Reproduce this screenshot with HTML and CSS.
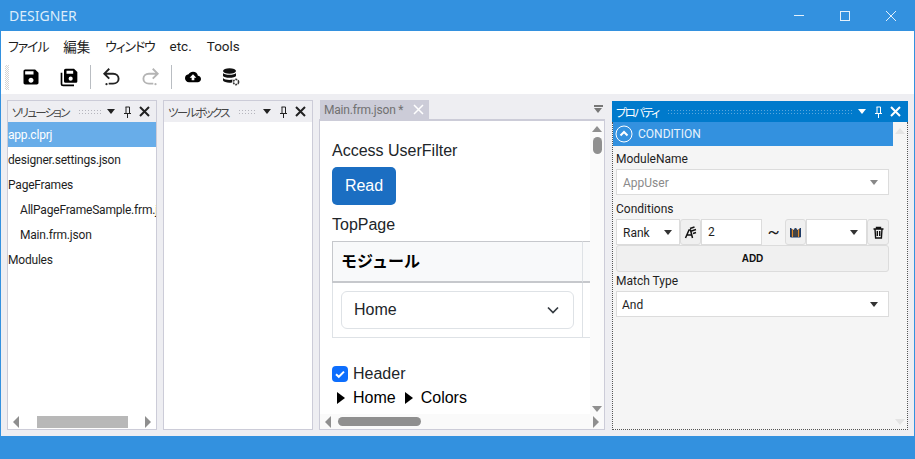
FILE: index.html
```html
<!DOCTYPE html>
<html lang="ja">
<head>
    <meta charset="UTF-8">
    <title>DESIGNER</title>
    <link rel="stylesheet" href="styles.css">
</head>
<body>
<div class="window">
    <div class="titlebar">
        <span class="app-title">DESIGNER</span>
        <div class="win-buttons">
            <svg width="46" height="31" viewBox="0 0 46 31"><path d="M17 15.500h10" stroke="#e3f0fb" fill="none"/></svg>
            <svg width="46" height="31" viewBox="0 0 46 31"><rect x="17.500" y="11.500" width="9" height="9" stroke="#e3f0fb" fill="none"/></svg>
            <svg width="46" height="31" viewBox="0 0 46 31"><path d="M17 11l10 10M27 11l-10 10" stroke="#e3f0fb" fill="none"/></svg>
        </div>
    </div>

    <div class="menubar">
        <span class="kana">ファイル</span>
        <span>編集</span>
        <span class="kana">ウィンドウ</span>
        <span>etc.</span>
        <span>Tools</span>
    </div>

    <div class="toolbar">
        <div class="gripper"></div>
        <button class="tool">
            <svg width="20" height="20" viewBox="0 0 24 24"><path d="M17 3H5c-1.110 0-2 .9-2 2v14c0 1.100.89 2 2 2h14c1.100 0 2-.9 2-2V7l-4-4zm-5 16c-1.660 0-3-1.340-3-3s1.340-3 3-3 3 1.340 3 3-1.340 3-3 3zm3-10H5V5h10v4z" fill="#000"/></svg>
        </button>
        <button class="tool">
            <svg width="20" height="20" viewBox="0 0 24 24"><path d="M8 2h10l4 4v11c0 1.100-.9 2-2 2H8c-1.100 0-2-.9-2-2V4c0-1.100.9-2 2-2zm6 14.500a2.500 2.500 0 1 0 0-5 2.500 2.500 0 0 0 0 5zM9 8h8V4.500H9z" fill="#000" fill-rule="evenodd"/><path d="M3 7v13c0 1.100.9 2 2 2h13" stroke="#000" stroke-width="2" fill="none"/></svg>
        </button>
        <div class="tool-sep"></div>
        <button class="tool">
            <svg width="22" height="22" viewBox="0 0 20 20"><path d="M7.500 2.500L3 7l4.500 4.500M3.500 7H11c3 0 5 2 5 4.500S14 16 11 16H7" stroke="#222" stroke-width="1.700" fill="none"/><circle cx="5" cy="16.500" r="1" fill="#222"/></svg>
        </button>
        <button class="tool">
            <svg width="22" height="22" viewBox="0 0 20 20"><path d="M12.500 2.500L17 7l-4.500 4.500M16.500 7H9c-3 0-5 2-5 4.500S6 16 9 16h4" stroke="#b4b4b4" stroke-width="1.700" fill="none"/><circle cx="15" cy="16.500" r="1" fill="#b4b4b4"/></svg>
        </button>
        <div class="tool-sep"></div>
        <button class="tool">
            <svg width="16" height="16" viewBox="0 0 24 24"><path d="M19.350 10.040A7.490 7.490 0 0 0 12 4C9.110 4 6.600 5.640 5.350 8.040A5.994 5.994 0 0 0 0 14c0 3.310 2.690 6 6 6h13c2.760 0 5-2.240 5-5 0-2.640-2.050-4.780-4.650-4.960zM14 13v4h-4v-4H7l5-5 5 5h-3z" fill="#000"/></svg>
        </button>
        <button class="tool">
            <svg width="20" height="20" viewBox="0 0 20 20"><ellipse cx="8.500" cy="4" rx="6.500" ry="2.800" fill="#111"/><path d="M2 6c1 2.400 12 2.400 13 0v3c-1 2.400-12 2.400-13 0zM2 11c1.500 2 7 2.400 9.500 1.600l-.5 3c-4 .6-8-.3-9-2z" fill="#111"/><circle cx="15" cy="15" r="2.600" stroke="#333" stroke-width="1.600" stroke-dasharray="2 .8" fill="none"/></svg>
        </button>
    </div>

    <div class="dock">
        <section class="panel panel-side">
            <div class="panel-head">
                <span class="panel-title">ソリューション</span>
                <span class="grip"></span>
                <i class="caret-down"></i>
                <svg class="pin" width="9" height="12" viewBox="0 0 9 12"><path d="M1 7.500h7M2.500 1h4v6.500M3 1v6.500M4.500 7.500V12" stroke="#222" fill="none"/></svg>
                <svg class="close" width="11" height="11" viewBox="0 0 11 11"><path d="M1 1l9 9M10 1l-9 9" stroke="#222" stroke-width="2" fill="none"/></svg>
            </div>
            <ul class="tree">
                <li class="selected">app.clprj</li>
                <li>designer.settings.json</li>
                <li>PageFrames</li>
                <li class="indent">AllPageFrameSample.frm.json</li>
                <li class="indent">Main.frm.json</li>
                <li>Modules</li>
            </ul>
            <div class="hscroll">
                <i class="arrow-left"></i>
                <div class="track side-track"><div class="thumb side-thumb"></div></div>
                <i class="arrow-right"></i>
            </div>
        </section>

        <section class="panel panel-side">
            <div class="panel-head">
                <span class="panel-title">ツールボックス</span>
                <span class="grip"></span>
                <i class="caret-down"></i>
                <svg class="pin" width="9" height="12" viewBox="0 0 9 12"><path d="M1 7.500h7M2.500 1h4v6.500M3 1v6.500M4.500 7.500V12" stroke="#222" fill="none"/></svg>
                <svg class="close" width="11" height="11" viewBox="0 0 11 11"><path d="M1 1l9 9M10 1l-9 9" stroke="#222" stroke-width="2" fill="none"/></svg>
            </div>
        </section>

        <section class="doc">
            <div class="doc-tabs">
                <div class="doc-tab">
                    <span>Main.frm.json *</span>
                    <svg width="11" height="11" viewBox="0 0 11 11"><path d="M1 1l9 9M10 1l-9 9" stroke="#fff" stroke-width="1.500" fill="none"/></svg>
                </div>
                <div class="tab-menu"><span></span><i></i></div>
            </div>
            <div class="doc-body">
                <div class="doc-main">
                    <div class="doc-view">
                        <div class="doc-label">Access UserFilter</div>
                        <button class="btn-read">Read</button>
                        <div class="doc-label top-page">TopPage</div>
                        <div class="grid-table">
                            <div class="grid-head">モジュール</div>
                            <div class="grid-head-rest"></div>
                            <div class="grid-cell">
                                <div class="web-select">
                                    <span>Home</span>
                                    <svg width="12" height="8" viewBox="0 0 12 8"><path d="M1 1.500l5 5 5-5" stroke="#343a40" stroke-width="1.700" fill="none"/></svg>
                                </div>
                            </div>
                            <div class="grid-cell-rest"></div>
                        </div>
                        <label class="check-row">
                            <svg width="16" height="16" viewBox="0 0 16 16"><rect width="16" height="16" rx="4" fill="#0d6efd"/><path d="M4 8.200l2.800 2.600L12 5.600" stroke="#fff" stroke-width="2" fill="none"/></svg>
                            <span>Header</span>
                        </label>
                        <div class="crumbs">
                            <i class="crumb-arrow"></i><span>Home</span>
                            <i class="crumb-arrow"></i><span>Colors</span>
                        </div>
                    </div>
                    <div class="vscroll">
                        <i class="arrow-up"></i>
                        <div class="v-thumb"></div>
                        <i class="arrow-down"></i>
                    </div>
                </div>
                <div class="hscroll doc-hscroll">
                    <i class="arrow-left"></i>
                    <div class="track doc-track"><div class="thumb doc-thumb"></div></div>
                    <i class="arrow-right"></i>
                </div>
            </div>
        </section>

        <section class="props">
            <div class="props-head">
                <span class="panel-title">プロパティ</span>
                <span class="grip grip-light"></span>
                <i class="caret-down caret-white"></i>
                <svg class="pin" width="9" height="12" viewBox="0 0 9 12"><path d="M1 7.500h7M2.500 1h4v6.500M3 1v6.500M4.500 7.500V12" stroke="#fff" fill="none"/></svg>
                <svg class="close" width="11" height="11" viewBox="0 0 11 11"><path d="M1 1l9 9M10 1l-9 9" stroke="#fff" stroke-width="2" fill="none"/></svg>
            </div>
            <div class="props-body">
                <div class="props-main">
                    <div class="section-head">
                        <svg width="18" height="18" viewBox="0 0 18 18"><circle cx="9" cy="9" r="8" stroke="#fff" fill="none"/><path d="M5.500 10.500L9 7l3.500 3.500" stroke="#fff" stroke-width="2" fill="none"/></svg>
                        <span>CONDITION</span>
                    </div>
                    <div class="form">
                        <div class="field-label">ModuleName</div>
                        <div class="combo combo-disabled"><span>AppUser</span><i></i></div>
                        <div class="field-label label-conditions">Conditions</div>
                        <div class="cond-row">
                            <div class="combo cond-rank"><span>Rank</span><i></i></div>
                            <button class="icon-btn">
                                <svg width="13" height="13" viewBox="0 0 13 13"><path d="M1.500 12L5 4h1.500L8.500 12M3.200 9h4.300M6 2.500l4.500-1.500M7.500 5l4.500-1.500M9 7.500l3-1" stroke="#111" stroke-width="1.500" fill="none"/></svg>
                            </button>
                            <div class="cond-input">2</div>
                            <span class="tilde">~</span>
                            <button class="icon-btn">
                                <svg width="13" height="13" viewBox="0 0 13 13"><path d="M1.500 2v9h10V2L9 5 6.500 2 4 5z" fill="#444" stroke="#1d3a66"/><path d="M3.500 3v8M9.500 3v8" stroke="#e08a2c"/></svg>
                            </button>
                            <div class="combo cond-end"><span></span><i></i></div>
                            <button class="icon-btn icon-trash">
                                <svg width="13" height="13" viewBox="0 0 13 13"><path d="M1.500 3h10M4.500 3V1.500h4V3M3 3l.6 9h5.800l.6-9M5.300 5v5M7.700 5v5" stroke="#111" stroke-width="1.400" fill="none"/></svg>
                            </button>
                        </div>
                        <button class="btn-add">ADD</button>
                        <div class="field-label label-match">Match Type</div>
                        <div class="combo combo-match"><span>And</span><i></i></div>
                    </div>
                </div>
                <div class="props-gutter">
                    <i class="gutter-up"></i>
                    <i class="gutter-down"></i>
                </div>
            </div>
        </section>
    </div>

    <div class="statusbar"></div>
</div>
</body>
</html>
```

FILE: styles.css
```css
html, body {
    margin: 0;
    padding: 0;
    height: 100%;
    overflow: hidden;
}

body {
    font-family: Roboto, "Noto Sans CJK JP", sans-serif;
    font-size: 12px;
    color: #1e1e1e;
    font-feature-settings: "palt";
}

ul {
    list-style: none;
    margin: 0;
    padding: 0;
}

button {
    font-family: inherit;
    padding: 0;
    border: none;
    background: none;
}

i {
    display: block;
}

.window {
    width: 915px;
    height: 459px;
    box-sizing: border-box;
    display: flex;
    flex-direction: column;
    background: #fff;
    border-left: 1px solid #3391df;
    border-right: 1px solid #3391df;
}

/* Title bar */
.titlebar {
    height: 31px;
    flex: none;
    margin: 0 -1px;
    padding-left: 9px;
    display: flex;
    align-items: center;
    justify-content: space-between;
    background: #3391df;
}

.app-title {
    color: #dcecfa;
    font-family: "Noto Sans", sans-serif;
    font-size: 14px;
}

.win-buttons {
    display: flex;
    height: 31px;
}

/* Menu */
.menubar {
    height: 29px;
    flex: none;
    padding-left: 7px;
    display: flex;
    align-items: center;
    gap: 15px;
    font-size: 13.500px;
}

.menubar .kana {
    font-size: 13px;
    letter-spacing: -1.200px;
}

.toolbar {
    height: 34px;
    flex: none;
    padding-left: 4px;
    display: flex;
    align-items: center;
}

.gripper {
    width: 4px;
    height: 25px;
    margin-right: 3px;
    background-image: conic-gradient(#d4d4d4 25%, transparent 0 50%, #d4d4d4 0 75%, transparent 0);
    background-size: 2px 2px;
}

.tool {
    width: 38px;
    height: 30px;
    display: flex;
    align-items: center;
    justify-content: center;
}

.tool-sep {
    width: 1px;
    height: 24px;
    margin: 0 2px;
    background: #b9bdc2;
}

/* Docking area */
.dock {
    flex: 1;
    min-height: 0;
    box-sizing: border-box;
    padding: 6px;
    display: flex;
    background: #eeeef2;
}

.panel {
    box-sizing: border-box;
    display: flex;
    flex-direction: column;
    background: #fff;
    border: 1px solid #ccccd8;
    overflow: hidden;
}

.panel-side {
    width: 150px;
    margin-right: 6px;
}

.panel-head {
    height: 21px;
    flex: none;
    padding: 0 6px 0 4px;
    display: flex;
    align-items: center;
    background: #eeeef2;
    color: #444;
}

.panel-title {
    font-size: 11.500px;
    letter-spacing: -1.800px;
    white-space: nowrap;
}

.grip {
    flex: 1;
    height: 6px;
    margin: 0 6px 0 9px;
    background-image: radial-gradient(#b5b5bd 40%, transparent 45%);
    background-size: 3px 3px;
}

.caret-down {
    width: 0;
    height: 0;
    margin-right: 8px;
    border-left: 4px solid transparent;
    border-right: 4px solid transparent;
    border-top: 5px solid #222;
}

.caret-white {
    border-top-color: #fff;
}

.pin {
    margin-right: 7px;
}

.tree {
    flex: 1;
    min-height: 0;
    overflow: hidden;
    letter-spacing: -0.200px;
}

.tree li {
    height: 25px;
    line-height: 27px;
    white-space: nowrap;
}

.tree .selected {
    background: #68ade9;
    color: #fff;
}

.tree .indent {
    padding-left: 12px;
}

/* Scrollbars */
.hscroll {
    height: 15px;
    flex: none;
    padding: 0 5px;
    display: flex;
    align-items: center;
}

.arrow-left {
    width: 0;
    height: 0;
    border-top: 6px solid transparent;
    border-bottom: 6px solid transparent;
    border-right: 6px solid #8f8f8f;
}

.arrow-right {
    width: 0;
    height: 0;
    border-top: 6px solid transparent;
    border-bottom: 6px solid transparent;
    border-left: 6px solid #8f8f8f;
}

.track {
    flex: 1;
    height: 12px;
}

.thumb {
    height: 12px;
    background: #b8b8b8;
}

.side-thumb {
    width: 91px;
    margin-left: 18px;
}

/* Document pane */
.doc {
    width: 286px;
    margin: 0 7px 0 0;
    display: flex;
    flex-direction: column;
}

.doc-tabs {
    height: 19px;
    flex: none;
    padding-left: 1px;
    display: flex;
    justify-content: space-between;
}

.doc-tab {
    width: 109px;
    box-sizing: border-box;
    padding: 0 5px 0 4px;
    display: flex;
    align-items: center;
    justify-content: space-between;
    background: #ccccd8;
    color: #717171;
    letter-spacing: -0.200px;
    white-space: nowrap;
}

.doc-tab span {
    padding-top: 1px;
}

.tab-menu {
    width: 9px;
    margin: 5px 2px 0 0;
}

.tab-menu span {
    display: block;
    height: 2px;
    margin-bottom: 1px;
    background: #777;
}

.tab-menu i {
    width: 0;
    height: 0;
    border-left: 4.500px solid transparent;
    border-right: 4.500px solid transparent;
    border-top: 5px solid #777;
}

.doc-body {
    flex: 1;
    min-height: 0;
    display: flex;
    flex-direction: column;
    box-sizing: border-box;
    border: 1px solid #ccccd8;
    border-top-width: 2px;
    background: #fff;
}

.doc-main {
    flex: 1;
    min-height: 0;
    display: flex;
}

.doc-view {
    flex: 1;
    min-width: 0;
    box-sizing: border-box;
    padding: 17px 0 0 12px;
    overflow: hidden;
    font-family: "Liberation Sans", "Noto Sans CJK JP", sans-serif;
    font-size: 16px;
    line-height: 24px;
    color: #212529;
}

.doc-label {
    height: 24px;
    line-height: 26px;
    white-space: nowrap;
}

.btn-read {
    display: block;
    width: 64px;
    height: 38px;
    margin-top: 5px;
    border-radius: 5px;
    background: #1b6ec2;
    color: #fff;
    font-family: inherit;
    font-size: 16px;
}

.top-page {
    margin-top: 7px;
}

.grid-table {
    width: 290px;
    margin-top: 5px;
    display: grid;
    grid-template-columns: 251px 39px;
    grid-template-rows: 42px 55px;
}

.grid-head {
    padding-left: 8px;
    line-height: 40px;
    font-weight: 700;
    font-feature-settings: normal;
    color: #000;
    background: #f8f9fa;
    border: 1px solid #c6c8cc;
    border-bottom-width: 2px;
    border-right-color: #dee2e6;
}

.grid-head-rest {
    background: #f8f9fa;
    border-top: 1px solid #c6c8cc;
    border-bottom: 2px solid #c6c8cc;
}

.grid-cell {
    box-sizing: border-box;
    padding: 8px 8px 0 8px;
    border: 1px solid #dee2e6;
    border-top: none;
}

.grid-cell-rest {
    border-bottom: 1px solid #dee2e6;
}

.web-select {
    height: 38px;
    box-sizing: border-box;
    padding: 0 14px 0 12px;
    display: flex;
    align-items: center;
    justify-content: space-between;
    border: 1px solid #dee2e6;
    border-radius: 6px;
}

.check-row {
    margin-top: 24px;
    height: 24px;
    display: flex;
    align-items: center;
    gap: 5px;
}

.crumbs {
    height: 24px;
    display: flex;
    align-items: center;
    color: #000;
}

.crumb-arrow {
    width: 0;
    height: 0;
    margin: 0 8px 0 5px;
    border-top: 6px solid transparent;
    border-bottom: 6px solid transparent;
    border-left: 8px solid #000;
}

.crumbs span + .crumb-arrow {
    margin-left: 9px;
}

.vscroll {
    width: 14px;
    flex: none;
    padding: 5px 0 2px;
    display: flex;
    flex-direction: column;
    align-items: center;
    background: #fafafa;
}

.arrow-up {
    width: 0;
    height: 0;
    border-left: 5px solid transparent;
    border-right: 5px solid transparent;
    border-bottom: 6px solid #8f8f8f;
}

.arrow-down {
    width: 0;
    height: 0;
    margin-top: auto;
    border-left: 5px solid transparent;
    border-right: 5px solid transparent;
    border-top: 6px solid #8f8f8f;
}

.v-thumb {
    width: 9px;
    height: 17px;
    margin-top: 5px;
    border-radius: 5px;
    background: #8f8f8f;
}

.doc-hscroll {
    background: #fafafa;
}

.doc-thumb {
    width: 83px;
    height: 9px;
    margin: 1px 0 0 7px;
    border-radius: 5px;
    background: #8f8f8f;
}

/* Properties pane */
.props {
    flex: 1;
    display: flex;
    flex-direction: column;
    min-width: 0;
}

.props-head {
    height: 21px;
    flex: none;
    margin-top: 1px;
    padding: 0 7px 0 4px;
    display: flex;
    align-items: center;
    background: #007acc;
    color: #fff;
}

.props-head .grip {
    margin-right: 6px;
}

.grip-light {
    background-image: radial-gradient(#5aa7dd 40%, transparent 45%);
}

.props-body {
    flex: 1;
    min-height: 0;
    display: flex;
    box-sizing: border-box;
    background: #f5f5f5;
    border: 1px dotted #555;
    border-top: none;
}

.props-main {
    flex: 1;
    min-width: 0;
}

.section-head {
    height: 24px;
    padding-left: 2px;
    display: flex;
    align-items: center;
    gap: 5px;
    background: #3391df;
    color: #e8f3fc;
}

.form {
    padding: 4px 4px 0 3px;
}

.field-label {
    height: 18px;
    line-height: 18px;
}

.combo {
    height: 26px;
    box-sizing: border-box;
    padding: 0 10px 0 5px;
    display: flex;
    align-items: center;
    justify-content: space-between;
    background: #fff;
    border: 1px solid #dcdcdc;
}

.combo span {
    padding-top: 2px;
}

.combo i {
    width: 0;
    height: 0;
    border-left: 4px solid transparent;
    border-right: 4px solid transparent;
    border-top: 5px solid #333;
}

.combo-disabled {
    margin-top: 1px;
    padding-left: 6px;
    color: #8a8a8a;
}

.combo-disabled i {
    border-top-color: #888;
}

.label-conditions {
    margin-top: 5px;
}

.cond-row {
    margin-top: 1px;
    display: flex;
    align-items: center;
}

.cond-rank {
    width: 64px;
    padding-left: 6px;
    padding-right: 7px;
}

.icon-btn {
    width: 21px;
    height: 26px;
    flex: none;
    box-sizing: border-box;
    display: flex;
    align-items: center;
    justify-content: center;
    background: #f0f0f0;
    border: 1px solid #dcdcdc;
    border-radius: 3px;
}

.icon-trash {
    width: 22px;
}

.cond-input {
    width: 61px;
    height: 26px;
    box-sizing: border-box;
    padding-left: 6px;
    line-height: 24px;
    background: #fff;
    border: 1px solid #dcdcdc;
}

.tilde {
    width: 23px;
    text-align: center;
    font-size: 18px;
    line-height: 26px;
}

.cond-end {
    width: 61px;
    padding-right: 8px;
}

.btn-add {
    display: block;
    width: 100%;
    height: 27px;
    box-sizing: border-box;
    background: #f0f0f0;
    border: 1px solid #dcdcdc;
    border-radius: 3px;
    font-family: "Liberation Sans", sans-serif;
    font-size: 10px;
    font-weight: 700;
    color: #111;
}

.combo-match {
    margin-top: 1px;
}

.props-gutter {
    width: 14px;
    flex: none;
    padding: 6px 0 4px;
    display: flex;
    flex-direction: column;
    align-items: center;
    justify-content: space-between;
}

.gutter-up {
    width: 0;
    height: 0;
    border-left: 5px solid transparent;
    border-right: 5px solid transparent;
    border-bottom: 6px solid #e4e4e4;
}

.gutter-down {
    width: 0;
    height: 0;
    border-left: 5px solid transparent;
    border-right: 5px solid transparent;
    border-top: 6px solid #e4e4e4;
}

.statusbar {
    height: 23px;
    flex: none;
    margin: 0 -1px;
    background: #3391df;
}
```
